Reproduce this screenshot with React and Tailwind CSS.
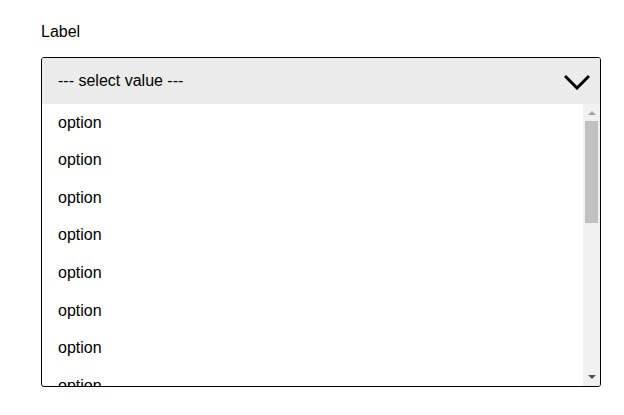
import React from 'react';

const options = Array.from({ length: 18 }, () => 'option');

export default function App() {
    return (
        <div className="min-h-screen bg-white pt-[23px] pl-[41px] font-['Liberation_Sans',Arial,sans-serif] text-[16px] text-black">
            <label className="block leading-[18.4px] mb-[15.6px]">Label</label>

            <div className="w-[560px] h-[330px] border border-black rounded-[3px] overflow-hidden flex flex-col">
                <div className="h-[46px] shrink-0 bg-[#ececec] flex items-center justify-between pl-4 pr-[10px] pt-[1px]">
                    <span className="leading-[18.4px]">--- select value ---</span>
                    <svg width="26" height="16" viewBox="0 0 26 16" fill="none" stroke="black" strokeWidth="3">
                        <polyline points="1,2 13,14 25,2" />
                    </svg>
                </div>
                <div className="flex-1 flex min-h-0">
                    <ul className="flex-1 overflow-hidden">
                        {options.map((o, i) => (
                            <li key={i} className="px-4 py-[9.6px] leading-[18.4px]">
                                {o}
                            </li>
                        ))}
                    </ul>
                    <div className="w-[17px] shrink-0 bg-[#f1f1f1] flex flex-col">
                        <div className="h-[17px] flex items-center justify-center">
                            <svg width="8" height="5" viewBox="0 0 8 5">
                                <polygon points="0,5 4,1 8,5" fill="#a3a3a3" />
                            </svg>
                        </div>
                        <div className="h-[102px] w-[13px] mx-auto bg-[#c1c1c1]" />
                        <div className="flex-1" />
                        <div className="h-[17px] flex items-center justify-center">
                            <svg width="8" height="5" viewBox="0 0 8 5">
                                <polygon points="0,0 8,0 4,4" fill="#505050" />
                            </svg>
                        </div>
                    </div>
                </div>
            </div>
        </div>
    );
}
